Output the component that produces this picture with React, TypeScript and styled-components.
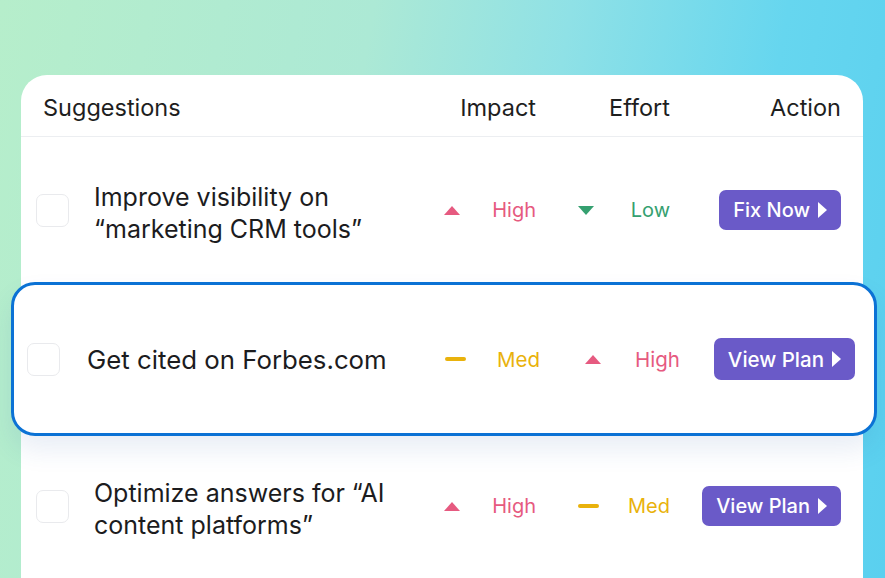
import styled, { createGlobalStyle, css } from 'styled-components';

type Level = 'high' | 'med' | 'low';

type Suggestion = {
  title: string;
  impact: Level;
  effort: Level;
  action: string;
  active?: boolean;
};

const suggestions: Suggestion[] = [
  { title: 'Improve visibility on “marketing CRM tools”', impact: 'high', effort: 'low', action: 'Fix Now' },
  { title: 'Get cited on Forbes.com', impact: 'med', effort: 'high', action: 'View Plan', active: true },
  { title: 'Optimize answers for “AI content platforms”', impact: 'high', effort: 'med', action: 'View Plan' },
];

const levelColor: Record<Level, string> = {
  high: '#e65a80',
  med: '#e9b20c',
  low: '#35a070',
};

const levelLabel: Record<Level, string> = {
  high: 'High',
  med: 'Med',
  low: 'Low',
};

export default function App() {
  return (
    <>
      <GlobalStyle />
      <Page>
        <Card>
          <HeaderRow>
            <HeadCell>Suggestions</HeadCell>
            <HeadCell $end>Impact</HeadCell>
            <HeadCell $end>Effort</HeadCell>
            <HeadCell $end>Action</HeadCell>
          </HeaderRow>
          {suggestions.map((s) => (
            <Row key={s.title} $active={s.active}>
              <TitleCell>
                <Checkbox $active={s.active} />
                <Title $active={s.active}>{s.title}</Title>
              </TitleCell>
              <LevelCell level={s.impact} active={s.active} />
              <LevelCell level={s.effort} active={s.active} />
              <ActionButton $active={s.active}>
                {s.action}
                <Caret />
              </ActionButton>
            </Row>
          ))}
        </Card>
      </Page>
    </>
  );
}

function LevelCell({ level, active }: { level: Level; active?: boolean }) {
  return (
    <LevelBox $active={active} $color={levelColor[level]}>
      <IconSlot>
        {level === 'med' ? <Dash /> : <Triangle $down={level === 'low'} />}
      </IconSlot>
      <span>{levelLabel[level]}</span>
    </LevelBox>
  );
}

const GlobalStyle = createGlobalStyle`
  html, body {
    margin: 0;
    padding: 0;
    height: 578px;
    overflow: hidden;
    font-family: Inter, "Noto Sans", "Liberation Sans", sans-serif;
  }
  body {
    background: linear-gradient(100deg, #b6eecb 0%, #ace9d5 38%, #8fe1e6 58%, #66d6ef 80%, #5ad0ef 100%);
  }
`;

const Page = styled.div`
  height: 578px;
  padding: 75px 22px 0 21px;
  box-sizing: border-box;
  overflow: hidden;
`;

const Card = styled.div`
  background: #ffffff;
  border-radius: 26px 26px 0 0;
  min-height: 560px;
  width: 842px;
`;

const grid = css`
  display: grid;
  grid-template-columns: 1fr 92px 134px 171px;
  align-items: center;
`;

const HeaderRow = styled.div`
  ${grid};
  height: 61px;
  padding: 0 22px;
  border-bottom: 1px solid #eceef1;
  box-sizing: content-box;
`;

const HeadCell = styled.div<{ $end?: boolean }>`
  font-size: 23.5px;
  color: #1e1e1e;
  justify-self: ${({ $end }) => ($end ? 'end' : 'start')};
  padding-top: 3px;
`;

const Row = styled.div<{ $active?: boolean }>`
  ${grid};
  height: 146px;
  padding: 0 22px 0 15px;
  box-sizing: border-box;
  position: relative;
  background: #ffffff;

  ${({ $active }) =>
    $active &&
    css`
      grid-template-columns: 1fr 95px 140px 175px;
      height: 154px;
      margin: -1px -14px -3px -10px;
      padding: 0 19px 0 13px;
      border: 3px solid #0b72d5;
      border-radius: 24px;
      box-shadow: 0 14px 26px rgba(40, 90, 170, 0.1);
      z-index: 1;
    `}
`;

const TitleCell = styled.div`
  display: flex;
  align-items: center;
`;

const Checkbox = styled.div<{ $active?: boolean }>`
  flex: none;
  width: 31px;
  height: 31px;
  border: 1px solid #e9eaed;
  border-radius: 7px;
  background: #ffffff;
  margin-right: ${({ $active }) => ($active ? '27px' : '25px')};
`;

const Title = styled.div<{ $active?: boolean }>`
  font-size: ${({ $active }) => ($active ? '25.8px' : '25px')};
  line-height: 32px;
  color: #1c1c1e;
  max-width: ${({ $active }) => ($active ? '360px' : '330px')};
  padding-top: ${({ $active }) => ($active ? '2px' : '5px')};
`;

const LevelBox = styled.div<{ $active?: boolean; $color: string }>`
  justify-self: end;
  display: flex;
  align-items: center;
  justify-content: space-between;
  width: ${({ $active }) => ($active ? '95px' : '92px')};
  font-size: ${({ $active }) => ($active ? '20.5px' : '20px')};
  color: ${({ $color }) => $color};
`;

const IconSlot = styled.span`
  display: flex;
  align-items: center;
  width: 22px;
`;

const Triangle = styled.span<{ $down?: boolean }>`
  width: 0;
  height: 0;
  border-left: 8.5px solid transparent;
  border-right: 8.5px solid transparent;
  ${({ $down }) =>
    $down
      ? css`
          border-top: 9px solid currentColor;
        `
      : css`
          border-bottom: 9px solid currentColor;
        `}
`;

const Dash = styled.span`
  width: 21px;
  height: 4px;
  border-radius: 2px;
  background: currentColor;
`;

const ActionButton = styled.button<{ $active?: boolean }>`
  justify-self: end;
  display: flex;
  align-items: center;
  gap: 8px;
  height: ${({ $active }) => ($active ? '42px' : '40px')};
  padding: 0 14px;
  border: none;
  border-radius: 7px;
  background: #6a5ac8;
  color: #ffffff;
  font-family: inherit;
  font-size: ${({ $active }) => ($active ? '20.5px' : '20px')};
  font-weight: 500;
  cursor: pointer;
`;

const Caret = styled.span`
  width: 0;
  height: 0;
  border-top: 8px solid transparent;
  border-bottom: 8px solid transparent;
  border-left: 9px solid #ffffff;
`;
